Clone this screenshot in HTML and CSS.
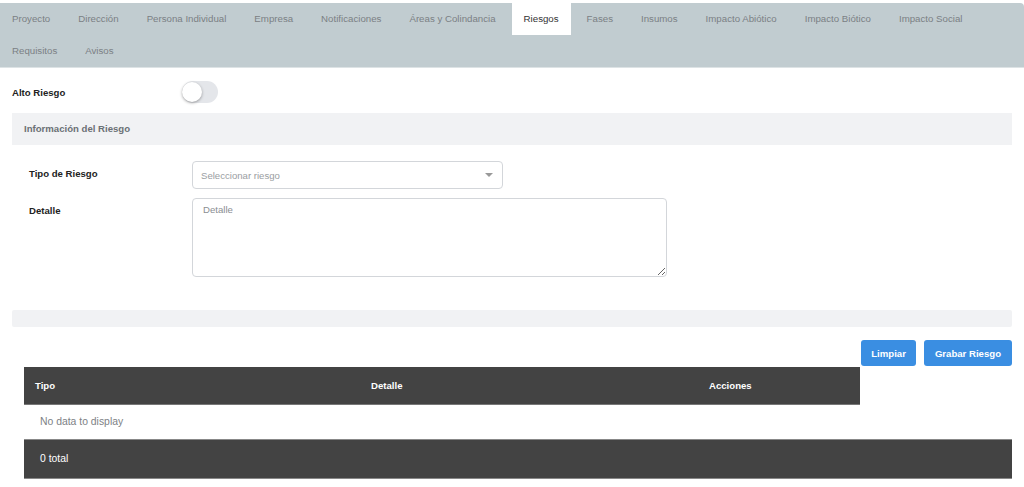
FILE: index.html
```html
<!DOCTYPE html>
<html lang="es">
<head>
<meta charset="utf-8">
<title>Riesgos</title>
<link rel="stylesheet" href="styles.css">
</head>
<body>
<nav class="tabs">
  <a class="tab">Proyecto</a>
  <a class="tab">Dirección</a>
  <a class="tab">Persona Individual</a>
  <a class="tab">Empresa</a>
  <a class="tab">Notificaciones</a>
  <a class="tab">Áreas y Colindancia</a>
  <a class="tab active">Riesgos</a>
  <a class="tab">Fases</a>
  <a class="tab">Insumos</a>
  <a class="tab">Impacto Abiótico</a>
  <a class="tab">Impacto Biótico</a>
  <a class="tab">Impacto Social</a>
  <a class="tab">Requisitos</a>
  <a class="tab">Avisos</a>
</nav>
<main class="content">
  <div class="toggle-row">
    <span class="toggle-label">Alto Riesgo</span>
    <span class="switch"><span class="knob"></span></span>
  </div>
  <div class="section-header">Información del Riesgo</div>
  <div class="form">
    <div class="form-row">
      <label class="field-label">Tipo de Riesgo</label>
      <div class="select">
        <span class="placeholder">Seleccionar riesgo</span>
        <span class="caret"></span>
      </div>
    </div>
    <div class="form-row">
      <label class="field-label">Detalle</label>
      <textarea class="textarea" placeholder="Detalle"></textarea>
    </div>
  </div>
  <div class="divider-bar"></div>
  <div class="actions">
    <button class="btn">Limpiar</button>
    <button class="btn">Grabar Riesgo</button>
  </div>
  <div class="table">
    <div class="thead">
      <span class="th col-tipo">Tipo</span>
      <span class="th col-detalle">Detalle</span>
      <span class="th col-acciones">Acciones</span>
    </div>
    <div class="empty">No data to display</div>
    <div class="tfoot">0 total</div>
  </div>
</main>
</body>
</html>
```

FILE: styles.css
```css
* { box-sizing: border-box; }
html, body { margin: 0; padding: 0; background: #fff; }
body {
  font-family: "Liberation Sans", Arial, sans-serif;
  font-size: 9.6px;
  color: #333;
}

.tabs {
  margin-top: 3px;
  background: #c1ccd0;
  display: flex;
  flex-wrap: wrap;
  column-gap: 4px;
  border-top-right-radius: 4px;
  border-bottom: 1px solid #dde3e5;
  font-size: 9.7px;
}
.tab {
  height: 32px;
  line-height: 32px;
  padding: 0 12px;
  color: #7b8084;
  white-space: nowrap;
}
.tab.active {
  background: #fff;
  color: #333;
}

.content { padding: 0 12px; }

.toggle-row {
  display: flex;
  align-items: center;
  margin-top: 13px;
  height: 22px;
}
.toggle-label {
  width: 170px;
  font-weight: bold;
  color: #222;
}
.switch {
  position: relative;
  width: 36px;
  height: 22px;
  border-radius: 11px;
  background: #e4e6ea;
}
.knob {
  position: absolute;
  left: 0;
  top: 1px;
  width: 20px;
  height: 20px;
  border-radius: 50%;
  background: #fff;
  box-shadow: 0 1px 3px rgba(0,0,0,0.35);
}

.section-header {
  margin-top: 10px;
  height: 32px;
  line-height: 32px;
  padding-left: 12px;
  background: #f1f2f4;
  color: #6b7075;
  font-weight: bold;
}

.form {
  padding-left: 17px;
  margin-top: 16px;
  display: flex;
  flex-direction: column;
  gap: 9px;
}
.form-row {
  display: flex;
  align-items: flex-start;
}
.field-label {
  width: 163px;
  padding-top: 7px;
  font-weight: bold;
  color: #222;
}
.select {
  width: 311px;
  height: 28px;
  border: 1px solid #d3d6da;
  border-radius: 4px;
  display: flex;
  align-items: center;
  justify-content: space-between;
  padding: 0 9px 0 8px;
}
.placeholder { color: #9a9ea2; }
.caret {
  width: 0;
  height: 0;
  border-left: 4px solid transparent;
  border-right: 4px solid transparent;
  border-top: 4px solid #999;
}
.textarea {
  width: 475px;
  height: 79px;
  border: 1px solid #d3d6da;
  border-radius: 4px;
  padding: 5px 10px;
  font-family: "Liberation Sans", Arial, sans-serif;
  font-size: 9.6px;
  color: #333;
  margin: 0;
}
.textarea::placeholder { color: #8a8e92; }

.divider-bar {
  margin-top: 33px;
  height: 17px;
  background: #f1f2f4;
  border-radius: 2px;
}

.actions {
  display: flex;
  justify-content: flex-end;
  gap: 8px;
  margin-top: 13px;
}
.btn {
  height: 26px;
  padding: 0 10px;
  border: none;
  border-radius: 3px;
  background: #3a8ee2;
  color: #fff;
  font-family: "Liberation Sans", Arial, sans-serif;
  font-size: 9.6px;
  font-weight: bold;
}
.btn + .btn { padding: 0 11px; }

.table { margin: 1px 0 0 12px; }
.thead {
  width: 836px;
  height: 38px;
  background: #434343;
  display: flex;
  align-items: center;
  border-bottom: 1px solid #777;
}
.th { color: #fff; font-weight: bold; }
.col-tipo { width: 347px; padding-left: 11px; }
.col-detalle { width: 338px; }
.col-acciones { flex: 1; }
.empty {
  height: 34px;
  line-height: 34px;
  padding-left: 16px;
  color: #7d8185;
  font-size: 10.4px;
}
.tfoot {
  height: 40px;
  line-height: 38px;
  padding-left: 16px;
  background: #434343;
  color: #fff;
  border-top: 1px solid #888;
  border-bottom: 1px solid #888;
  font-size: 10.4px;
}
```
